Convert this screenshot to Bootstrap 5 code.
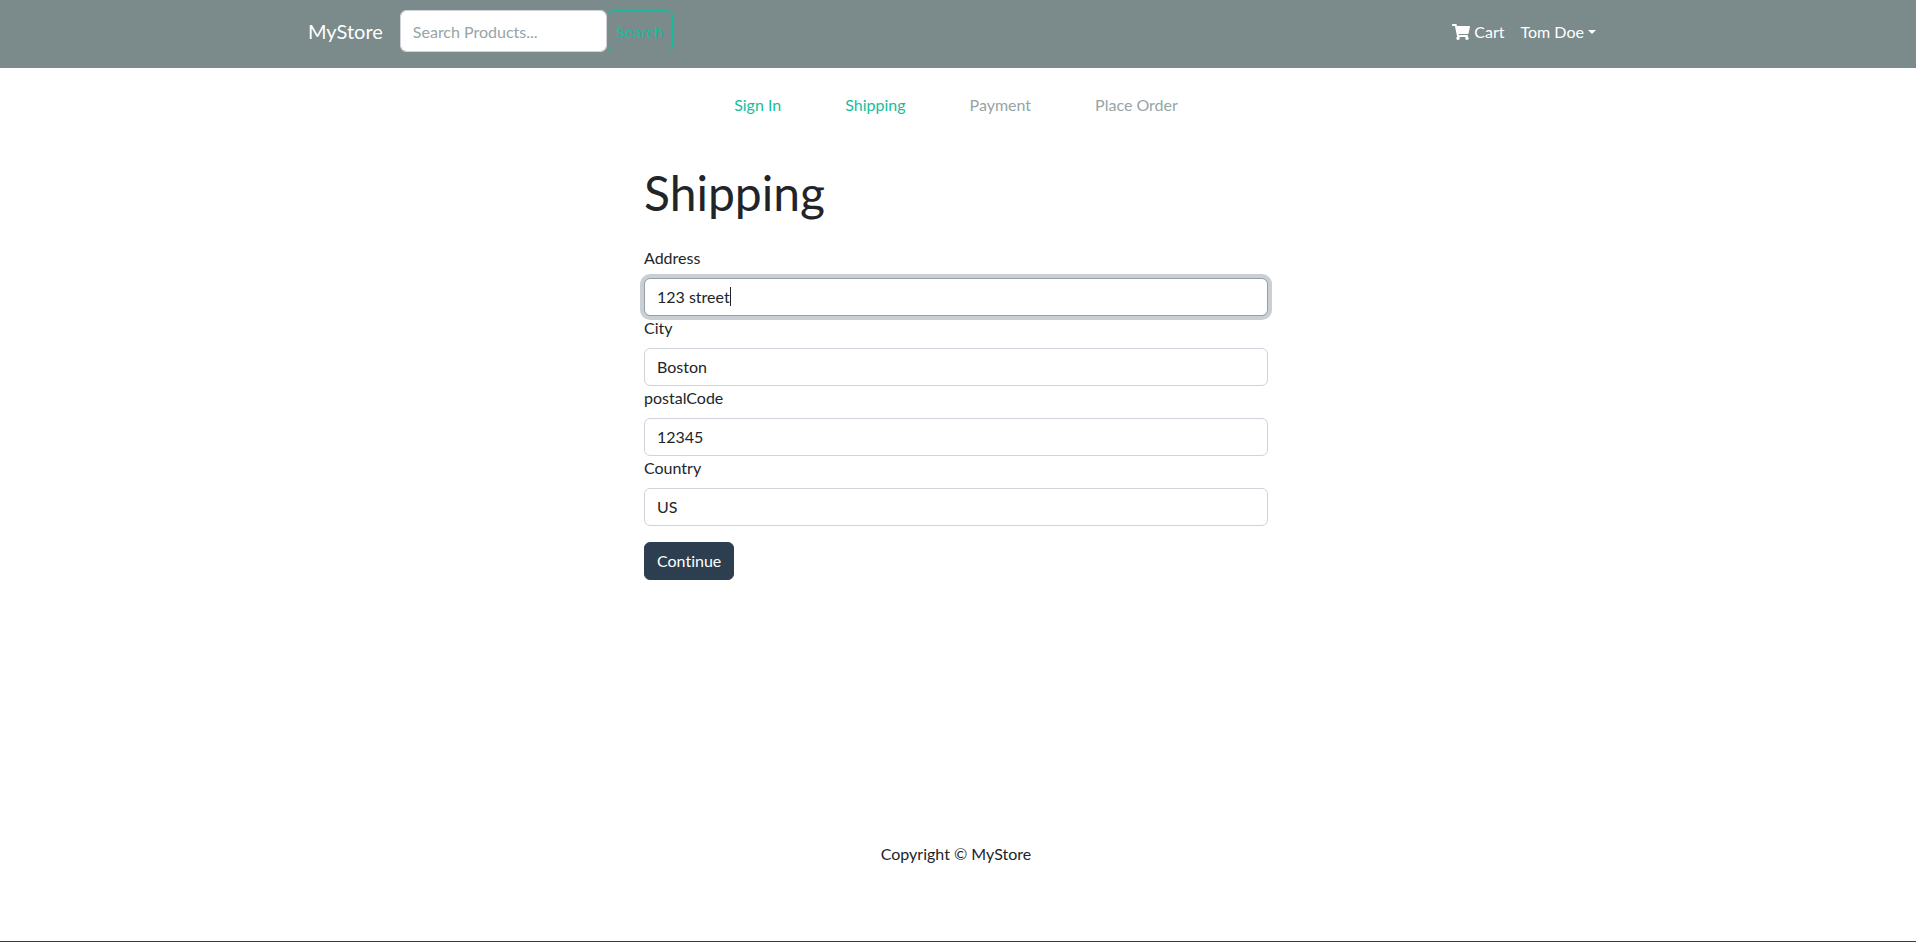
<!DOCTYPE html>
<html lang="en">
<head>
<meta charset="utf-8">
<meta name="viewport" content="width=device-width, initial-scale=1">
<title>MyStore - Shipping</title>
<link href="https://cdn.jsdelivr.net/npm/bootstrap@5.3.0/dist/css/bootstrap.min.css" rel="stylesheet">
<style>
  body { font-family: Lato, "Open Sans", sans-serif; font-variant-ligatures: none; color: #212529; padding-right: 4px; min-height: 100vh; border-bottom: 1px solid #3c3c3f; }
  input, button { font-variant-ligatures: none; }
  .site-header { background: #7b8a8b; margin-right: -4px; padding-right: 4px; }
  .store-nav { padding: 10px 0 16px; --bs-navbar-brand-padding-y: 0; --bs-nav-link-padding-y: 0; }
  .store-nav .navbar-brand { margin-right: 17px; color: #fff; }
  .store-nav .navbar-nav { padding-top: 2px; }
  .store-nav .nav-link { color: #fff; }
  .search-box { width: 207px; padding-top: 8px; border-color: #ced4da; }
  .search-box::placeholder { color: #95a5a6; }
  .btn-find { width: 66px; padding: 9px 8px 7px; color: #18bc9c; border-color: #18bc9c; }
  .btn-find:hover { color: #fff; background: #18bc9c; }
  .cart-icon { width: 18px; height: 16px; vertical-align: -2px; }
  .steps { padding-top: 1px; margin-bottom: 23px; }
  .steps .nav-link { padding: 8px 32px; color: #18bc9c; }
  .steps .nav-link.disabled { color: #95a5a6; }
  .page-title { font-size: 48px; font-weight: 400; line-height: 58px; padding: 16px 0; margin-bottom: 8px; }
  .form-control { border-color: #ced4da; color: #212529; }
  .form-control:focus { border-color: #969fa8; box-shadow: 0 0 0 4px #cacfd3; color: #212529; }
  #address { caret-color: transparent; }
  .text-caret { display: none; left: 86px; top: 9px; width: 1px; height: 19px; background: #212529; pointer-events: none; }
  #address:focus + .text-caret { display: block; }
  .btn-continue, .btn-continue:hover { background: #2c3e50; border-color: #2c3e50; color: #fff; }
  .page-main { min-height: 80vh; }
  .site-footer { padding: 20px 0; }
</style>
</head>
<body class="d-flex flex-column">
<header class="site-header">
  <nav class="navbar navbar-expand-lg store-nav">
    <div class="container">
      <a class="navbar-brand" href="#">MyStore</a>
      <form class="d-flex" role="search">
        <input class="form-control search-box" type="search" placeholder="Search Products..." aria-label="Search products">
        <button class="btn btn-find" type="submit">Search</button>
      </form>
      <ul class="navbar-nav flex-row ms-auto">
        <li class="nav-item"><a class="nav-link" href="#"><svg class="cart-icon" viewBox="0 0 576 512" fill="currentColor" aria-hidden="true"><path d="M528.12 301.319l47.273-208C578.806 78.301 567.391 64 551.99 64H159.208l-9.166-44.81C147.758 8.021 137.93 0 126.529 0H24C10.745 0 0 10.745 0 24v16c0 13.255 10.745 24 24 24h69.883l70.248 343.435C147.325 417.1 136 435.222 136 456c0 30.928 25.072 56 56 56s56-25.072 56-56c0-15.674-6.447-29.835-16.824-40h209.647C430.447 426.165 424 440.326 424 456c0 30.928 25.072 56 56 56s56-25.072 56-56c0-22.172-12.888-41.332-31.579-50.405l5.517-24.276c3.413-15.018-8.002-29.319-23.403-29.319H218.117l-6.545-32h293.145c11.206 0 20.92-7.754 23.403-18.681z"/></svg> Cart</a></li>
        <li class="nav-item dropdown"><a class="nav-link dropdown-toggle" href="#" role="button" data-bs-toggle="dropdown" aria-expanded="false">Tom Doe</a>
          <ul class="dropdown-menu position-absolute"><li><a class="dropdown-item" href="#">Profile</a></li><li><a class="dropdown-item" href="#">Logout</a></li></ul>
        </li>
      </ul>
    </div>
  </nav>
</header>
<main class="page-main pt-3">
  <div class="container">
    <nav class="nav steps justify-content-center" aria-label="Checkout steps">
      <a class="nav-link" href="#">Sign In</a>
      <a class="nav-link" href="#" aria-current="step">Shipping</a>
      <a class="nav-link disabled" aria-disabled="true">Payment</a>
      <a class="nav-link disabled" aria-disabled="true">Place Order</a>
    </nav>
    <div class="container">
      <div class="row justify-content-center">
        <div class="col-12 col-md-6">
          <h1 class="page-title">Shipping</h1>
          <form>
            <div><label class="form-label" for="address">Address</label>
              <div class="position-relative"><input class="form-control" id="address" type="text" value="123 street" autofocus><span class="text-caret position-absolute"></span></div></div>
            <div><label class="form-label" for="city">City</label><input class="form-control" id="city" type="text" value="Boston"></div>
            <div><label class="form-label" for="postal">postalCode</label><input class="form-control" id="postal" type="text" value="12345"></div>
            <div><label class="form-label" for="country">Country</label><input class="form-control" id="country" type="text" value="US"></div>
            <button class="btn btn-continue mt-3" type="submit">Continue</button>
          </form>
        </div>
      </div>
    </div>
  </div>
</main>
<footer class="container text-center site-footer">Copyright &copy; MyStore</footer>
<script src="https://cdn.jsdelivr.net/npm/bootstrap@5.3.0/dist/js/bootstrap.bundle.min.js"></script>
<script>
  const address = document.getElementById("address");
  address.focus();
  address.setSelectionRange(address.value.length, address.value.length);
</script>
</body>
</html>
